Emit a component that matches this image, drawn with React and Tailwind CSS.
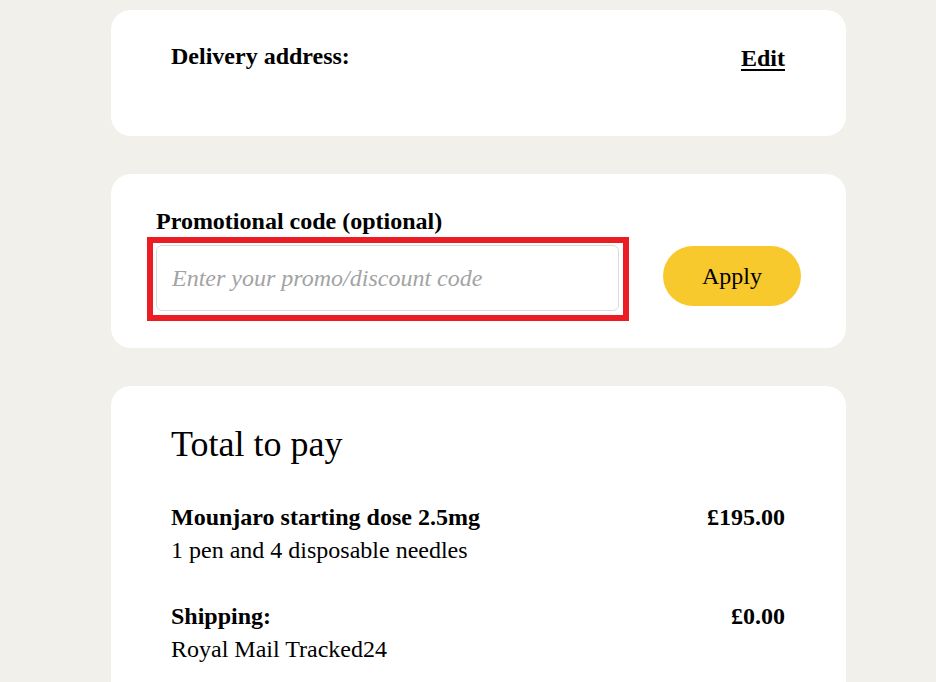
export default function App() {
  const serif = { fontFamily: '"Liberation Serif", "Times New Roman", serif' };
  return (
    <div className="min-h-[682px] w-[936px] bg-[#f1f0eb] text-black" style={serif}>
      <div className="ml-[111px] flex w-[735px] flex-col gap-[38px] pt-[10px]">
        {/* Delivery address */}
        <div className="h-[126px] rounded-[20px] bg-white pl-[60px] pr-[61px] pt-[34px]">
          <div className="flex items-start justify-between">
            <h3 className="text-[24px] font-bold leading-none">Delivery address:</h3>
            <button className="mt-[2px] text-[24px] font-bold leading-none underline underline-offset-[3px]" style={serif}>Edit</button>
          </div>
        </div>

        {/* Promo code */}
        <div className="h-[174px] rounded-[20px] bg-white px-[45px] pt-[35px]">
          <label className="block text-[24px] font-bold leading-none">Promotional code (optional)</label>
          <div className="mt-[12px] flex items-start">
            <div className="relative w-[463px]">
              <input
                type="text"
                placeholder="Enter your promo/discount code"
                className="h-[66px] w-full rounded-[6px] border border-[#dddbd4] bg-white px-[15px] text-[24px] italic outline-none placeholder:text-[#a3a3a3]"
                style={serif}
              />
              <div className="pointer-events-none absolute -bottom-[10px] -left-[9px] -right-[10px] -top-[8px] border-[6px] border-[#ec1c24]" />
            </div>
            <button className="ml-auto mt-[1px] h-[60px] w-[138px] rounded-full bg-[#f8c92d] text-[24px]" style={serif}>Apply</button>
          </div>
        </div>

        {/* Total */}
        <div className="h-[320px] rounded-t-[20px] bg-white pl-[60px] pr-[61px] pt-[40px]">
          <h2 className="text-[36px] leading-none">Total to pay</h2>
          <div className="mt-[39px] flex justify-between">
            <div>
              <div className="text-[24px] font-bold leading-[33px]">Mounjaro starting dose 2.5mg</div>
              <div className="text-[24px] leading-[33px]">1 pen and 4 disposable needles</div>
            </div>
            <div className="text-[24px] font-bold leading-[33px]">£195.00</div>
          </div>
          <div className="mt-[33px] flex justify-between">
            <div>
              <div className="text-[24px] font-bold leading-[33px]">Shipping:</div>
              <div className="text-[24px] leading-[33px]">Royal Mail Tracked24</div>
            </div>
            <div className="text-[24px] font-bold leading-[33px]">£0.00</div>
          </div>
        </div>
      </div>
    </div>
  );
}
